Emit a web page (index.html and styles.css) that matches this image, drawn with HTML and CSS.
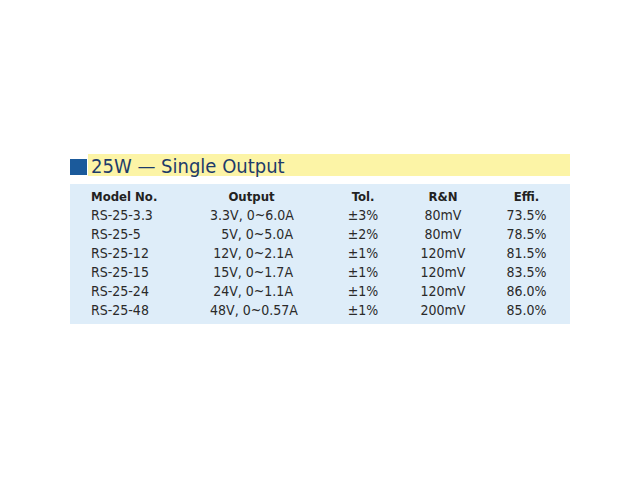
FILE: index.html
```html
<!DOCTYPE html>
<html lang="en">
<head>
    <meta charset="UTF-8">
    <meta name="viewport" content="width=device-width, initial-scale=1.0">
    <title>RS-25 Series</title>
    <link rel="stylesheet" href="styles.css">
</head>
<body>
    <div class="sheet">
        <div class="title-row">
            <div class="title-mark"></div>
            <div class="title-bar">25W — Single Output</div>
        </div>

        <div class="spec-table">
            <div class="cell head model">Model No.</div>
            <div class="cell head output">Output</div>
            <div class="cell head">Tol.</div>
            <div class="cell head">R&amp;N</div>
            <div class="cell head">Effi.</div>

            <div class="cell model">RS-25-3.3</div>
            <div class="cell output">3.3V, 0~6.0A</div>
            <div class="cell">±3%</div>
            <div class="cell">80mV</div>
            <div class="cell">73.5%</div>

            <div class="cell model">RS-25-5</div>
            <div class="cell output">5V, 0~5.0A</div>
            <div class="cell">±2%</div>
            <div class="cell">80mV</div>
            <div class="cell">78.5%</div>

            <div class="cell model">RS-25-12</div>
            <div class="cell output">12V, 0~2.1A</div>
            <div class="cell">±1%</div>
            <div class="cell">120mV</div>
            <div class="cell">81.5%</div>

            <div class="cell model">RS-25-15</div>
            <div class="cell output">15V, 0~1.7A</div>
            <div class="cell">±1%</div>
            <div class="cell">120mV</div>
            <div class="cell">83.5%</div>

            <div class="cell model">RS-25-24</div>
            <div class="cell output">24V, 0~1.1A</div>
            <div class="cell">±1%</div>
            <div class="cell">120mV</div>
            <div class="cell">86.0%</div>

            <div class="cell model">RS-25-48</div>
            <div class="cell output">48V, 0~0.57A</div>
            <div class="cell">±1%</div>
            <div class="cell">200mV</div>
            <div class="cell">85.0%</div>
        </div>
    </div>
</body>
</html>
```

FILE: styles.css
```css
body {
    margin: 0;
    background: #ffffff;
    font-family: "DejaVu Sans Condensed", "DejaVu Sans", sans-serif;
    font-stretch: condensed;
    color: #2a2a2a;
}

.sheet {
    width: 500px;
    margin-left: 70px;
    padding-top: 154px;
}

.title-row {
    display: flex;
    gap: 1px;
}

.title-mark {
    width: 17px;
    height: 16px;
    margin-top: 5px;
    background: #1b5a9b;
}

.title-bar {
    flex: 1;
    background: #fcf4a6;
    color: #1d3b6a;
    font-size: 20px;
    line-height: 19px;
    padding: 3px 0 0 3px;
}

.spec-table {
    display: grid;
    grid-template-columns: 140px 113px 80px 80px 87px;
    margin-top: 8px;
    padding: 3px 0 4px;
    background: #deedf9;
    font-size: 14px;
    line-height: 19px;
}

.cell {
    text-align: center;
    white-space: nowrap;
}

.cell.model {
    text-align: left;
    padding-left: 21px;
}

.cell.output {
    text-align: right;
    padding-right: 30px;
}

.cell.head {
    font-weight: bold;
    font-size: 13px;
    color: #222222;
}

.cell.head.output {
    text-align: center;
}
```
